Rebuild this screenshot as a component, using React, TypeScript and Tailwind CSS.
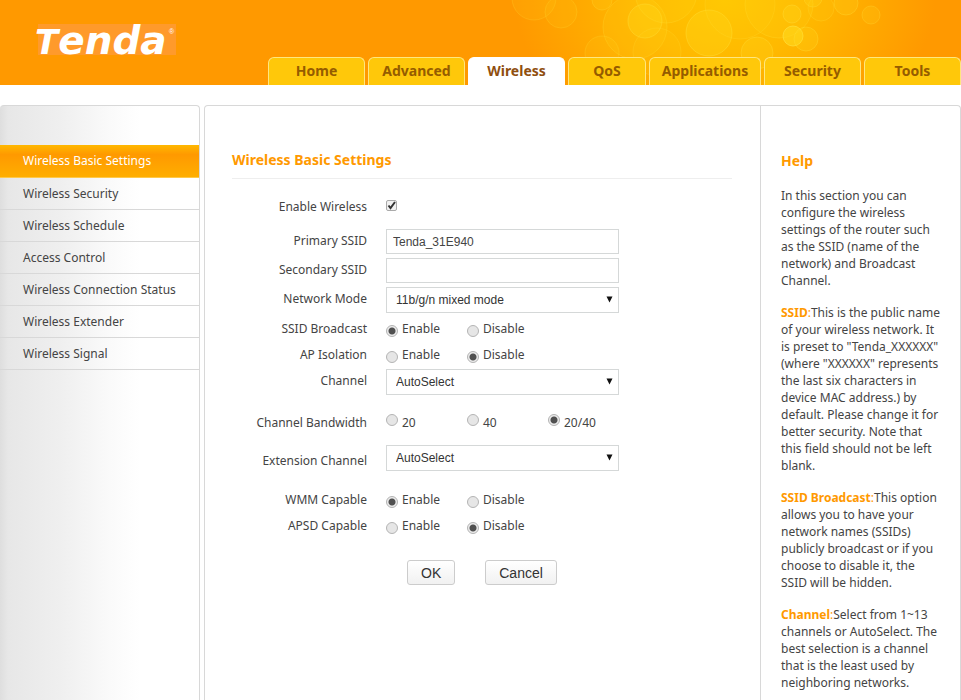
import type { ReactNode } from "react";

const tabs = [
  { name: "Home", size: "w-[97px]" },
  { name: "Advanced", size: "w-[97px]" },
  { name: "Wireless", size: "w-[97px]", active: true },
  { name: "QoS", size: "w-[78px]" },
  { name: "Applications", size: "w-[112px]" },
  { name: "Security", size: "w-[97px]" },
  { name: "Tools", size: "w-[97px]" },
];

const menu = [
  "Wireless Security",
  "Wireless Schedule",
  "Access Control",
  "Wireless Connection Status",
  "Wireless Extender",
  "Wireless Signal",
];

const bubbles = [
  [34, -2, 22, 0.12], [61, 12, 16, 0.12], [102, 0, 10, 0.18], [135, 27, 32, 0.14],
  [145, 21, 17, 0.3], [166, -8, 31, 0.14], [102, 53, 17, 0.12], [209, 33, 23, 0.3],
  [240, 4, 35, 0.12], [279, 4, 34, 0.14], [257, 53, 16, 0.25], [157, 52, 24, 0.1],
  [292, 14, 9, 0.28], [293, 36, 10, 0.6], [306, 39, 12, 0.22], [321, 8, 13, 0.12],
  [313, -2, 9, 0.22], [346, 3, 12, 0.2], [371, 15, 9, 0.18],
];

function Bubbles() {
  return (
    <svg className="absolute right-0 top-0" width="461" height="85" viewBox="0 0 461 85" aria-hidden="true">
      <defs>
        <radialGradient id="glow" gradientUnits="userSpaceOnUse" cx="0" cy="0" r="1" gradientTransform="translate(225 0) scale(210 150)">
          <stop offset="0" stopColor="#ffc600" />
          <stop offset="0.4" stopColor="#ffb900" />
          <stop offset="1" stopColor="#ff9900" />
        </radialGradient>
      </defs>
      <rect width="461" height="85" fill="url(#glow)" />
      {bubbles.map(([x, y, r, o]) => (
        <circle key={`${x}-${y}`} cx={x} cy={y} r={r} fill="#ffd91c" fillOpacity={o} stroke="#ffe03c" strokeOpacity={o + 0.1} />
      ))}
    </svg>
  );
}

function Row({ label, id, children, low = false }: { label: string; id?: string; children: ReactNode; low?: boolean }) {
  const style = `w-[135px] shrink-0 text-right leading-6 ${low ? "pt-1" : ""}`;
  return (
    <div className="flex h-[26px] gap-[19px]" role={id ? undefined : "radiogroup"} aria-label={id ? undefined : label}>
      {id ? <label htmlFor={id} className={style}>{label}</label> : <span className={style}>{label}</span>}
      {children}
    </div>
  );
}

function Radios({ name, options, value, raised = false }: { name: string; options: string[]; value: string; raised?: boolean }) {
  return (
    <div className="flex">
      {options.map((o) => (
        <label key={o} className="flex w-[81px] gap-1 whitespace-nowrap leading-6">
          <input
            type="radio"
            name={name}
            defaultChecked={o === value}
            className={`size-3 shrink-0 appearance-none rounded-full border border-[#b4b4b4] bg-[#e6e6e6] checked:bg-[radial-gradient(circle,#505050_0_3px,#ececec_4px)] ${raised ? "mt-[3px]" : "mt-2"}`}
          />
          {o}
        </label>
      ))}
    </div>
  );
}

function Select({ id, options }: { id: string; options: string[] }) {
  return (
    <div className="relative h-[26px] w-[233px]">
      <select id={id} className="h-full w-full appearance-none rounded-none border border-[#d5d8d8] bg-white pl-[9px] font-['Liberation_Sans',sans-serif] text-xs text-[#333]">
        {options.map((o) => <option key={o}>{o}</option>)}
      </select>
      <svg className="pointer-events-none absolute right-[6px] top-[9px]" width="7" height="7" viewBox="0 0 7 7" aria-hidden="true">
        <path d="M0.5 0.5h6L3.5 6.5z" fill="#111" />
      </svg>
    </div>
  );
}

function Term({ children }: { children: string }) {
  return <span className="text-[#ff9900]"><b>{children}</b>:</span>;
}

const textBox = "h-[25px] w-[233px] border border-[#d5d8d8] px-[6px] font-['Liberation_Sans',sans-serif] text-xs text-[#444]";
const button = "h-[25px] rounded-[3px] border border-[#ccc] bg-linear-to-b from-white to-[#f1f1f1] px-[13px] font-['Liberation_Sans',sans-serif] text-sm leading-none text-[#333]";

export default function App() {
  return (
    <div className="flex min-h-screen flex-col bg-white font-['Noto_Sans',sans-serif] text-xs text-[#444]">
      <header className="relative flex h-[85px] justify-between bg-[#ff9900]">
        <Bubbles />
        <div className="relative ml-[38px] mt-6 h-[31px] w-[138px] bg-[#ff9a2b]">
          <svg width="138" height="31" viewBox="0 0 138 31" className="overflow-visible" role="img" aria-label="Tenda">
            <text x="-3" y="30" fill="#fff" fontFamily="DejaVu Sans" fontWeight="700" fontStyle="italic" fontSize="39">
              <tspan fontSize="34">T</tspan>enda
            </text>
            <text x="131" y="10" fill="#fff" fontFamily="Liberation Sans" fontSize="7">®</text>
          </svg>
        </div>
        <nav className="relative flex items-end gap-[3px]">
          {tabs.map((t) => (
            <a
              key={t.name}
              href="#"
              className={`h-7 rounded-t-md border border-b-0 text-center text-sm leading-[26px] font-bold ${t.size} ${t.active ? "border-white bg-white text-[#8f4f10]" : "border-[#ffe680] bg-[#ffc80a] text-[#955c00]"}`}
            >
              {t.name}
            </a>
          ))}
        </nav>
      </header>

      <div className="mt-5 flex grow gap-1">
        <aside className="w-[200px] shrink-0 rounded-t border border-b-0 border-l-0 border-[#d8d8d8] bg-[linear-gradient(to_right,#dedede_0,#e7e7e7_8px,#efefef_60px,#fafafa_110px,#fff_140px)] pt-[39px]">
          <a href="#" className="block h-[33px] border-b border-[#ffc94a] bg-linear-to-b from-[#ffb800] via-[#ff9900] via-30% to-[#ffae00] pl-[23px] leading-8 text-white">
            Wireless Basic Settings
          </a>
          {menu.map((m) => (
            <a key={m} href="#" className="block border-b border-[#d8d8d8] pl-[23px] leading-[31px]">{m}</a>
          ))}
        </aside>

        <div className="flex grow rounded-t border border-b-0 border-[#d8d8d8]">
          <main className="grow pl-[27px] pr-7">
            <h1 className="mt-10 border-b border-[#eee] pb-1 text-sm leading-7 font-bold text-[#ff9900]">
              Wireless Basic Settings
            </h1>
            <form className="mt-4" onSubmit={(e) => e.preventDefault()}>
              <Row label="Enable Wireless" id="enable">
                <span className="relative mt-[5px] h-[11px] w-[11px]">
                  <input id="enable" type="checkbox" defaultChecked className="peer block size-[11px] appearance-none rounded-[2px] border border-[#aaa] bg-[#f1f1f1]" />
                  <svg className="pointer-events-none absolute inset-0 hidden peer-checked:block" width="11" height="11" viewBox="0 0 11 11" aria-hidden="true">
                    <path d="M2.5 5.5l2 2.5 4.5-6" fill="none" stroke="#333" strokeWidth="2" />
                  </svg>
                </span>
              </Row>
              <div className="mt-2 flex flex-col gap-[3px]">
                <Row label="Primary SSID" id="primary"><input id="primary" defaultValue="Tenda_31E940" className={textBox} /></Row>
                <Row label="Secondary SSID" id="secondary"><input id="secondary" className={textBox} /></Row>
                <Row label="Network Mode" id="mode"><Select id="mode" options={["11b/g/n mixed mode"]} /></Row>
              </div>
              <div className="mt-1">
                <Row label="SSID Broadcast"><Radios name="broadcast" options={["Enable", "Disable"]} value="Enable" /></Row>
                <Row label="AP Isolation"><Radios name="isolation" options={["Enable", "Disable"]} value="Disable" /></Row>
                <Row label="Channel" id="channel"><Select id="channel" options={["AutoSelect"]} /></Row>
              </div>
              <div className="mt-4 flex flex-col gap-2">
                <Row label="Channel Bandwidth"><Radios name="bandwidth" options={["20", "40", "20/40"]} value="20/40" raised /></Row>
                <Row label="Extension Channel" id="extension" low><Select id="extension" options={["AutoSelect"]} /></Row>
              </div>
              <div className="mt-[17px]">
                <Row label="WMM Capable"><Radios name="wmm" options={["Enable", "Disable"]} value="Enable" /></Row>
                <Row label="APSD Capable"><Radios name="apsd" options={["Enable", "Disable"]} value="Disable" /></Row>
              </div>
              <div className="ml-[175px] mt-5 flex gap-[30px]">
                <button type="submit" className={button}>OK</button>
                <button type="reset" className={button}>Cancel</button>
              </div>
            </form>
          </main>

          <section className="w-[200px] shrink-0 border-l border-[#d8d8d8] pl-5 pr-[18px] leading-[17px]">
            <h2 className="mt-[45px] text-sm font-bold text-[#ff9900]">Help</h2>
            <p className="mt-4">
              In this section you can configure the wireless settings of the router such as the SSID (name of the network) and Broadcast Channel.
            </p>
            <p className="mt-[15px]">
              <Term>SSID</Term>This is the public name of your wireless network. It is preset to "Tenda_XXXXXX" (where "XXXXXX" represents the last six characters in device MAC address.) by default. Please change it for better security. Note that this field should not be left blank.
            </p>
            <p className="mt-[15px]">
              <Term>SSID Broadcast</Term>This option allows you to have your network names (SSIDs) publicly broadcast or if you choose to disable it, the SSID will be hidden.
            </p>
            <p className="mt-[15px]">
              <Term>Channel</Term>Select from 1~13 channels or AutoSelect. The best selection is a channel that is the least used by neighboring networks.
            </p>
          </section>
        </div>
      </div>
    </div>
  );
}
